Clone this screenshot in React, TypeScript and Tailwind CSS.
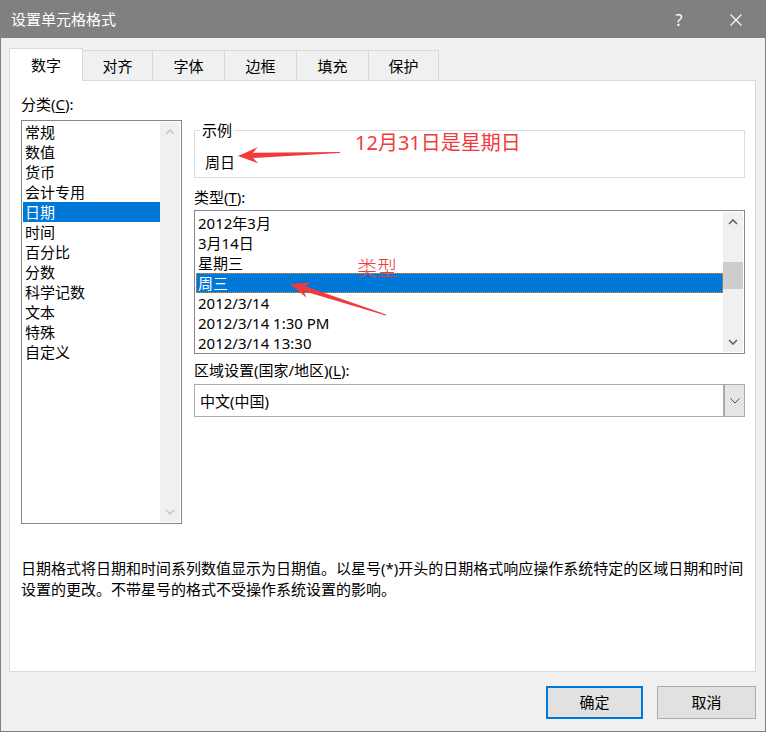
import React from "react";

const categories = ["常规", "数值", "货币", "会计专用", "日期", "时间", "百分比", "分数", "科学记数", "文本", "特殊", "自定义"];
const types = ["2012年3月", "3月14日", "星期三", "周三", "2012/3/14", "2012/3/14 1:30 PM", "2012/3/14 13:30"];
const tabs = [
  { label: "对齐", w: "w-[70px]" },
  { label: "字体", w: "w-[72px]" },
  { label: "边框", w: "w-[72px]" },
  { label: "填充", w: "w-[72px]" },
  { label: "保护", w: "w-[70px]" },
];

type Pt = [number, number];

// tapered annotation arrow, tail thin -> head
function arrowPoints(tail: Pt, tip: Pt, headLen = 20, headHalf = 8, neckLen = 15, neckHalf = 2.6, tailHalf = 0.6) {
  const dx = tip[0] - tail[0];
  const dy = tip[1] - tail[1];
  const len = Math.hypot(dx, dy);
  const ux = dx / len;
  const uy = dy / len;
  const nx = -uy;
  const ny = ux;
  const at = (d: number, w: number) => `${tip[0] - ux * d + nx * w},${tip[1] - uy * d + ny * w}`;
  return [
    `${tail[0] + nx * tailHalf},${tail[1] + ny * tailHalf}`,
    at(neckLen, neckHalf),
    at(headLen, headHalf),
    `${tip[0]},${tip[1]}`,
    at(headLen, -headHalf),
    at(neckLen, -neckHalf),
    `${tail[0] - nx * tailHalf},${tail[1] - ny * tailHalf}`,
  ].join(" ");
}

function Chevron({ up, color }: { up?: boolean; color: string }) {
  return (
    <svg width="10" height="6" viewBox="0 0 10 6">
      <polyline
        points={up ? "1,5 5,1 9,5" : "1,1 5,5 9,1"}
        fill="none"
        stroke={color}
        strokeWidth="1.6"
      />
    </svg>
  );
}

function ScrollBar({ disabled }: { disabled?: boolean }) {
  const c = disabled ? "#c5c5c5" : "#606060";
  return (
    <div className="w-[20px] h-full bg-[#f0f0f0] flex flex-col">
      <div className="h-[20px] flex items-center justify-center">
        <Chevron up color={c} />
      </div>
      <div className="flex-1">
        {!disabled && <div className="mt-[30px] h-[27px] bg-[#cdcdcd]" />}
      </div>
      <div className="h-[20px] flex items-center justify-center">
        <Chevron color={c} />
      </div>
    </div>
  );
}

export default function App() {
  return (
    <div className="relative w-[766px] h-[732px] text-black font-['Noto_Sans','Noto_Sans_CJK_SC',sans-serif]">
      <div className="w-full h-full flex flex-col border border-[#808080] bg-[#f0f0f0]">
        {/* title bar */}
        <div className="h-[37px] shrink-0 bg-[#808080] flex items-center pl-[10px] text-[15px] text-white">
          <span>设置单元格格式</span>
          <div className="ml-auto flex items-center pr-[23px]">
            <span className="w-[20px] text-center text-[16px] leading-none">?</span>
            <svg className="ml-[41px]" width="12" height="12" viewBox="0 0 12 12">
              <path d="M0.5 0.5 L11.5 11.5 M11.5 0.5 L0.5 11.5" stroke="#ffffff" strokeWidth="1.1" />
            </svg>
          </div>
        </div>

        {/* tabs */}
        <div className="mt-[10px] ml-[8px] h-[32px] flex items-end text-[15px] leading-[20px]">
          <div className="relative z-10 -mb-px w-[74px] h-[33px] bg-white border-l border-t border-r border-[#d9d9d9] pt-[6px] text-center">
            数字
          </div>
          {tabs.map((t) => (
            <div key={t.label} className={`${t.w} h-[30px] border-t border-r border-[#d9d9d9] pt-[5px] text-center`}>
              {t.label}
            </div>
          ))}
        </div>

        {/* tab page */}
        <div className="ml-[8px] w-[747px] h-[592px] shrink-0 border border-[#d9d9d9] bg-white pt-[13px] pl-[11px] text-[15px] leading-[20px]">
          <div className="flex gap-[12px]">
            {/* category */}
            <div className="w-[161px] flex flex-col">
              <div className="h-[20px]">
                分类(<span className="underline underline-offset-2">C</span>):
              </div>
              <div className="mt-[6px] h-[404px] border border-[#828790] p-px flex">
                <div className="flex-1 flex flex-col">
                  {categories.map((c) => (
                    <div
                      key={c}
                      className={`h-[20px] pl-[2px] ${c === "日期" ? "bg-[#0078d7] text-white" : ""}`}
                    >
                      {c}
                    </div>
                  ))}
                </div>
                <ScrollBar disabled />
              </div>
            </div>

            {/* right column */}
            <div className="w-[551px] flex flex-col pt-[26px]">
              <fieldset className="border border-[#dcdcdc]">
                <legend className="ml-[5px] px-[2px] leading-[20px]">示例</legend>
                <div className="pt-[12px] pb-[5px] pl-[10px] h-[37px]">周日</div>
              </fieldset>

              <div className="mt-[9px] h-[20px]">
                类型(<span className="underline underline-offset-2">T</span>):
              </div>
              <div className="mt-[3px] h-[144px] border border-[#828790] p-px flex">
                <div className="flex-1 flex flex-col pt-px">
                  {types.map((t) => (
                    <div
                      key={t}
                      className={
                        t === "周三"
                          ? "h-[20px] pl-px bg-[#0078d7] text-white border border-dotted border-[#ff8a00] leading-[18px]"
                          : "h-[20px] pl-[2px]"
                      }
                    >
                      {t}
                    </div>
                  ))}
                </div>
                <ScrollBar />
              </div>

              <div className="mt-[6px] h-[20px]">
                区域设置(国家/地区)(<span className="underline underline-offset-2">L</span>):
              </div>
              <div className="mt-[4px] h-[33px] border border-[#acacac] flex items-center">
                <span className="pl-[5px] flex-1">中文(中国)</span>
                <div className="w-[21px] h-full bg-[#e5e5e5] border-l-2 border-[#acacac] flex items-center justify-center">
                  <svg width="10" height="6" viewBox="0 0 10 6">
                    <polyline points="0.5,0.5 5,5 9.5,0.5" fill="none" stroke="#505050" strokeWidth="1" />
                  </svg>
                </div>
              </div>
            </div>
          </div>

          <div className="mt-[34px] leading-[21px] whitespace-nowrap">
            <div>日期格式将日期和时间系列数值显示为日期值。以星号(*)开头的日期格式响应操作系统特定的区域日期和时间</div>
            <div>设置的更改。不带星号的格式不受操作系统设置的影响。</div>
          </div>
        </div>

        {/* buttons */}
        <div className="mt-[14px] mr-[9px] flex justify-end gap-[14px] text-[15px]">
          <button className="w-[97px] h-[33px] bg-[#e1e1e1] border-2 border-[#0078d7]">确定</button>
          <button className="w-[99px] h-[33px] bg-[#e1e1e1] border border-[#adadad]">取消</button>
        </div>
      </div>

      {/* red annotations */}
      <div className="absolute left-[355px] top-[131px] text-[20px] leading-[24px] text-[#f23a3a] whitespace-nowrap">
        12月31日是星期日
      </div>
      <div className="absolute left-[357px] top-[257px] text-[20px] leading-[24px] text-[#f23a3a] font-light">
        类型
      </div>
      <svg className="absolute left-0 top-0 pointer-events-none" width="766" height="732">
        <polygon points={arrowPoints([340, 152.5], [238, 156])} fill="#f23a3a" />
        <polygon points={arrowPoints([386, 315], [290, 284])} fill="#f23a3a" />
      </svg>
    </div>
  );
}
